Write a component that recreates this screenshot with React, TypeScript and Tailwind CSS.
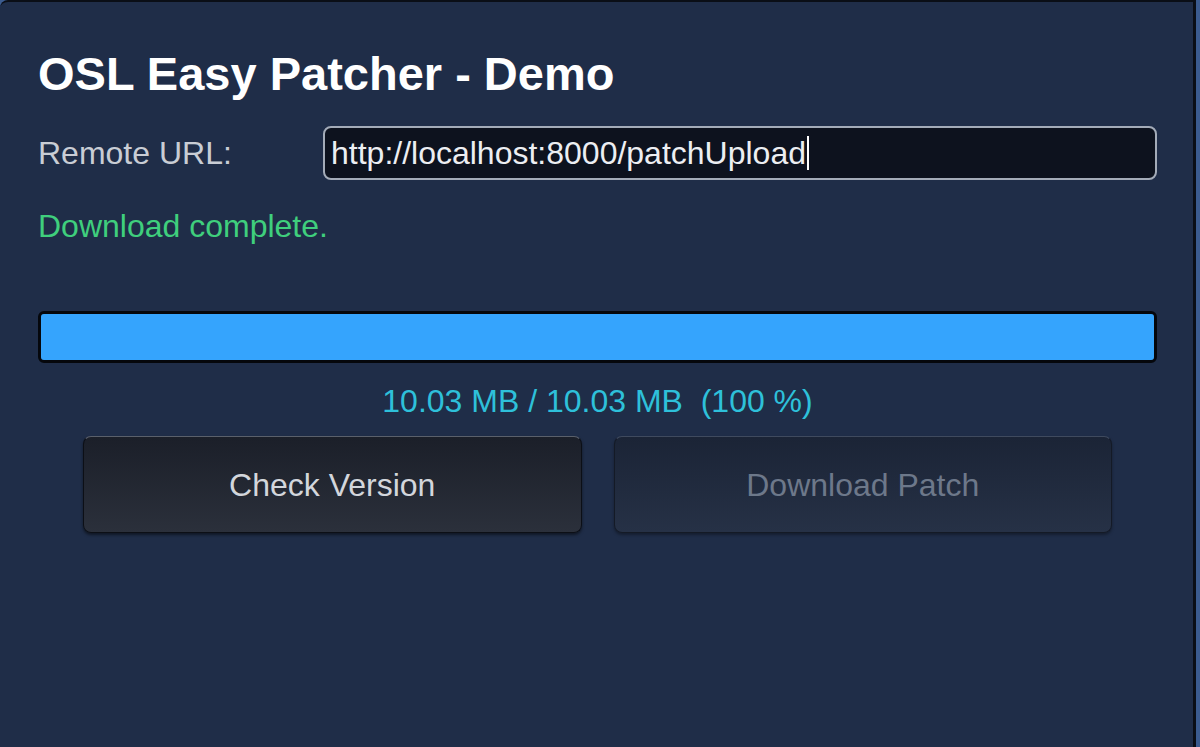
import { useState } from 'react';

export default function App() {
  const [url] = useState('http://localhost:8000/patchUpload');
  const downloaded = 10.03;
  const total = 10.03;
  const percent = Math.round((downloaded / total) * 100);

  return (
    <div className="w-[1200px] h-[747px] bg-[#3b5b8f] flex font-['Liberation_Sans',Arial,sans-serif] overflow-hidden">
      <div className="w-[1196px] h-[747px] bg-[#1f2d48] border-t-2 border-r-[3px] border-[#0a0e16] rounded-tl-lg flex flex-col pt-[45px] pl-[38px] pr-[36px]">
        {/* Title */}
        <h1 className="h-[54px] leading-[54px] text-[47px] font-bold text-white">
          OSL Easy Patcher - Demo
        </h1>

        {/* Remote URL */}
        <div className="mt-[25px] flex items-center h-[54px]">
          <div className="w-[285px] text-[32px] text-[#c9cdd5]">Remote URL:</div>
          <div className="flex-1 h-[54px] rounded-lg border-2 border-[#a3abb8] bg-[#0d121e] flex items-center pl-[6px] text-[32px] text-[#eceef2]">
            <span>{url}</span>
            <span className="inline-block w-[2px] h-[34px] bg-white ml-[1px]" />
          </div>
        </div>

        {/* Status */}
        <div className="mt-[26px] h-[40px] leading-[40px] text-[32px] text-[#3fcf7d]">
          Download complete.
        </div>

        {/* Progress bar */}
        <div className="mt-[65px] h-[52px] rounded-md border-[3px] border-[#05070c] bg-[#0d121e] overflow-hidden">
          <div className="h-full bg-[#35a4fd]" style={{ width: `${percent}%` }} />
        </div>

        <div className="mt-[18px] h-[40px] leading-[40px] text-center text-[32px] text-[#2ec0da] whitespace-pre">
          {`${downloaded.toFixed(2)} MB / ${total.toFixed(2)} MB  (${percent} %)`}
        </div>

        {/* Buttons */}
        <div className="mt-[15px] px-[45px] flex gap-[32px]">
          <button className="flex-1 h-[97px] rounded-lg border border-[#0c0f16] border-t-[#5a606b] bg-gradient-to-b from-[#1b1f29] to-[#2b303b] text-[32px] text-[#d3d6dc] shadow-[0_2px_3px_rgba(0,0,0,0.5)]">
            Check Version
          </button>
          <button
            disabled
            className="flex-1 h-[97px] rounded-lg border border-[#141a26] border-t-[#3f4a5e] bg-gradient-to-b from-[#1b2436] to-[#263146] text-[32px] text-[#6d788a] shadow-[0_2px_3px_rgba(0,0,0,0.35)]"
          >
            Download Patch
          </button>
        </div>
      </div>
    </div>
  );
}
